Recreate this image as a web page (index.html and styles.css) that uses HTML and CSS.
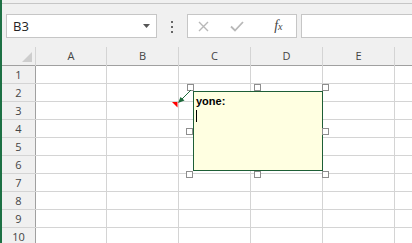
FILE: index.html
```html
<!DOCTYPE html>
<html lang="en">
<head>
  <meta charset="UTF-8" />
  <meta name="viewport" content="width=device-width, initial-scale=1" />
  <title>Sheet</title>
  <link rel="stylesheet" href="styles.css">
</head>
<body>

  <div class="app">
    <div class="edge"></div>
    <div class="main">

      <div class="toolbar">
        <div class="namebox">
          <span>B3</span>
          <svg width="7" height="4" viewBox="0 0 7 4"><polygon points="0,0 7,0 3.5,4" fill="#555"/></svg>
        </div>
        <div class="grip"><i></i><i></i><i></i></div>
        <div class="fbtns">
          <span class="fbtn">
            <svg width="11" height="11" viewBox="0 0 11 11"><path d="M1 1 L10 10 M10 1 L1 10" stroke="#b8b8b8" stroke-width="1.4" fill="none"/></svg>
          </span>
          <span class="fbtn">
            <svg width="14" height="11" viewBox="0 0 14 11"><path d="M1 5.5 L5 9.5 L13 1" stroke="#b8b8b8" stroke-width="1.8" fill="none"/></svg>
          </span>
          <span class="fbtn fx">f<small>x</small></span>
        </div>
        <div class="finput"></div>
      </div>

      <div class="sheet" id="sheet">
        <div class="corner"><svg width="10" height="10" viewBox="0 0 10 10"><polygon points="10,0 10,10 0,10" fill="#cdcdcd"/></svg></div>
      </div>

    </div>
  </div>

  <!-- comment being edited -->
  <div class="comment">
    <div class="author">yone:</div>
    <div class="caret"></div>
  </div>

  <div class="frame">
    <span class="handle h-tl"></span>
    <span class="handle h-tm"></span>
    <span class="handle h-tr"></span>
    <span class="handle h-ml"></span>
    <span class="handle h-mr"></span>
    <span class="handle h-bl"></span>
    <span class="handle h-bm"></span>
    <span class="handle h-br"></span>
  </div>

  <svg class="callout" width="412" height="243" viewBox="0 0 412 243">
    <polygon points="172,102 177.5,102 177.5,107.5" fill="#ff0000"/>
    <line x1="191" y1="90" x2="182" y2="99" stroke="#1e6b3c" stroke-width="1"/>
    <polygon points="178,103 180.5,97 184.5,100.5" fill="#1e6b3c"/>
  </svg>

  <script>
    const sheet = document.getElementById('sheet');
    const cols = ['A', 'B', 'C', 'D', 'E', ''];

    cols.forEach(c => {
      const h = document.createElement('div');
      h.className = 'colhead';
      h.textContent = c;
      sheet.appendChild(h);
    });

    for (let r = 1; r <= 11; r++) {
      const rh = document.createElement('div');
      rh.className = 'rowhead';
      rh.textContent = r;
      sheet.appendChild(rh);
      cols.forEach(() => {
        const cell = document.createElement('div');
        cell.className = 'cell';
        sheet.appendChild(cell);
      });
    }
  </script>

</body>
</html>
```

FILE: styles.css
```css
body {
  margin: 0;
  width: 412px;
  height: 243px;
  overflow: hidden;
  background: #f0f0f0;
  font-family: 'Open Sans', 'Liberation Sans', sans-serif;
  color: #444;
  position: relative;
}
.app {
  display: flex;
  height: 243px;
}
.edge {
  flex: none;
  width: 2px;
  background: #1e7145;
}
.main {
  flex: 1;
  overflow: hidden;
}
.toolbar {
  display: flex;
  align-items: flex-start;
  box-sizing: border-box;
  height: 44px;
  margin-top: 3px;
  padding: 10px 0 0 4px;
  border-top: 1px solid #c6c6c6;
}
.namebox {
  display: flex;
  align-items: center;
  justify-content: space-between;
  box-sizing: border-box;
  width: 151px;
  height: 24px;
  padding: 0 6px 0 6px;
  background: #fff;
  border: 1px solid #c6c6c6;
  font-size: 13px;
  color: #222;
  flex: none;
}
.grip {
  display: flex;
  flex-direction: column;
  gap: 3px;
  margin: 7px 14px 0 14px;
  flex: none;
}
.grip i {
  display: block;
  width: 2px;
  height: 2px;
  background: #666;
}
.fbtns {
  display: flex;
  align-items: center;
  box-sizing: border-box;
  width: 110px;
  height: 24px;
  padding-left: 0;
  background: #fff;
  border: 1px solid #c6c6c6;
  flex: none;
}
.fbtn {
  display: flex;
  align-items: center;
  justify-content: center;
  width: 36px;
  height: 22px;
}
.fbtn:first-child {
  width: 32px;
}
.fx {
  font-family: 'Liberation Serif', serif;
  font-style: italic;
  font-size: 14px;
  color: #444;
  padding-left: 6px;
}
.fx small {
  font-size: 10px;
}
.finput {
  flex: none;
  width: 160px;
  height: 24px;
  box-sizing: border-box;
  margin-left: 4px;
  background: #fff;
  border: 1px solid #c6c6c6;
}
.sheet {
  display: grid;
  grid-template-columns: 33px 70px repeat(5, 71px);
  grid-template-rows: 18px;
  grid-auto-rows: 17px;
  gap: 1px;
  background: #d4d4d4;
  font-size: 11px;
}
.corner {
  background: #f0f0f0;
  box-shadow: 0 1px 0 #a0a0a0;
  display: flex;
  align-items: flex-end;
  justify-content: flex-end;
  padding: 0 3px 3px 0;
}
.colhead {
  background: #f0f0f0;
  box-shadow: 0 1px 0 #a0a0a0;
  display: flex;
  align-items: center;
  justify-content: center;
  line-height: 18px;
}
.rowhead {
  background: #f0f0f0;
  box-shadow: 1px 0 0 #a0a0a0;
  text-align: center;
  line-height: 17px;
}
.cell {
  background: #fff;
}

/* comment overlay */
.comment {
  position: absolute;
  left: 193px;
  top: 91px;
  width: 130px;
  height: 80px;
  box-sizing: border-box;
  padding: 3px 2px;
  background: #ffffe1;
  border: 1px solid #1e5e36;
  font-family: 'Liberation Sans', Arial, sans-serif;
  font-size: 11px;
  color: #000;
}
.author {
  font-weight: bold;
  line-height: 13px;
}
.caret {
  width: 1px;
  height: 12px;
  margin-top: 2px;
  background: #000;
}
.frame {
  position: absolute;
  left: 190px;
  top: 87px;
  width: 135px;
  height: 87px;
}
.handle {
  position: absolute;
  width: 7px;
  height: 7px;
  box-sizing: border-box;
  background: #fff;
  border: 1px solid #8e8e8e;
}
.h-tl { left: -3px; top: -3px; }
.h-tm { left: 64px; top: -3px; }
.h-tr { left: 132px; top: -3px; }
.h-ml { left: -4px; top: 41px; }
.h-mr { left: 132px; top: 41px; }
.h-bl { left: -4px; top: 84px; }
.h-bm { left: 64px; top: 84px; }
.h-br { left: 132px; top: 84px; }
.callout {
  position: absolute;
  left: 0;
  top: 0;
  pointer-events: none;
}
```
